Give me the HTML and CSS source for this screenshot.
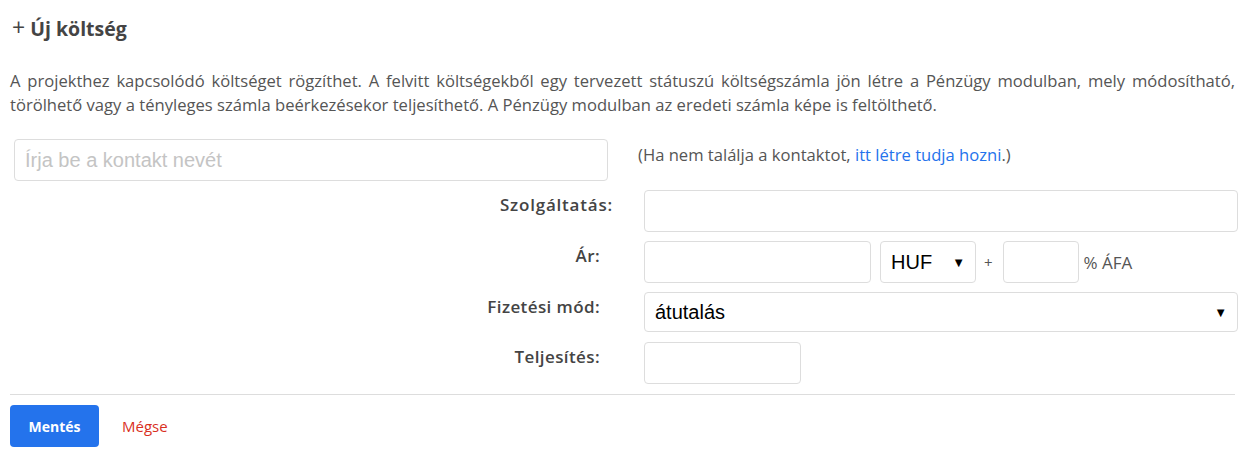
FILE: index.html
```html
<!DOCTYPE html>
<html lang="hu">
<head>
<meta charset="utf-8">
<title>Új költség</title>
<link rel="stylesheet" href="styles.css">
</head>
<body>
<div class="page">
  <h2 class="title"><span class="plus">+</span> Új költség</h2>
  <p class="intro"><span class="intro-line">A projekthez kapcsolódó költséget rögzíthet. A felvitt költségekből egy tervezett státuszú költségszámla jön létre a Pénzügy modulban, mely módosítható,</span><span class="intro-last">törölhető vagy a tényleges számla beérkezésekor teljesíthető. A Pénzügy modulban az eredeti számla képe is feltölthető.</span></p>

  <div class="contact-row">
    <input class="field contact" type="text" placeholder="Írja be a kontakt nevét">
    <span class="hint">(Ha nem találja a kontaktot, <a href="#">itt létre tudja hozni</a>.)</span>
  </div>

  <div class="form-row">
    <label class="label label-wide">Szolgáltatás:</label>
    <div class="controls"><input class="field full" type="text"></div>
  </div>
  <div class="form-row">
    <label class="label">Ár:</label>
    <div class="controls">
      <input class="field price" type="text">
      <div class="field select currency"><span>HUF</span><span class="arrow">▼</span></div>
      <span class="plus-sign">+</span>
      <input class="field vat" type="text">
      <span class="unit">% ÁFA</span>
    </div>
  </div>
  <div class="form-row">
    <label class="label">Fizetési mód:</label>
    <div class="controls"><div class="field select full pay"><span>átutalás</span><span class="arrow">▼</span></div></div>
  </div>
  <div class="form-row row-date">
    <label class="label">Teljesítés:</label>
    <div class="controls"><input class="field date" type="text"></div>
  </div>

  <hr class="sep">
  <div class="actions">
    <button class="btn-save" type="button">Mentés</button>
    <a class="cancel" href="#">Mégse</a>
  </div>
</div>
</body>
</html>
```

FILE: styles.css
```css
* { box-sizing: border-box; }
body {
  margin: 0;
  background: #fff;
  font-family: "Open Sans", "Noto Sans", sans-serif;
  color: #555;
}
.page { padding: 0 10px; }
.title {
  margin: 14px 0 0 2px;
  font-size: 19.5px;
  font-weight: 700;
  color: #444;
  line-height: 26px;
}
.plus { font-weight: 400; font-size: 23px; color: #444; }
.intro {
  margin: 27px 0 0 0;
  font-size: 16.6px;
  line-height: 24px;
  color: #555;
}
.intro-line {
  display: block;
  text-align: justify;
  text-align-last: justify;
}
.intro-last { display: block; }
.contact-row {
  display: flex;
  align-items: flex-start;
  margin-top: 22px;
  padding-left: 4px;
}
.field {
  flex-shrink: 0;
  height: 42px;
  border: 1px solid #ddd;
  border-radius: 4px;
  background: #fff;
  font-family: "Liberation Sans", Arial, sans-serif;
  font-size: 20px;
  color: #000;
  padding: 0 10px;
}
.contact { width: 594px; }
.contact::placeholder { color: #c4c4c4; }
.hint {
  margin-left: 30px;
  margin-top: 5px;
  font-size: 16.6px;
  line-height: 22px;
  white-space: nowrap;
}
.hint a { color: #2473ec; text-decoration: none; }
.form-row {
  display: flex;
  align-items: flex-start;
  margin-top: 9px;
}
.row-date { margin-top: 10px; }
.label {
  flex-shrink: 0;
  width: 634px;
  text-align: right;
  padding-right: 44px;
  padding-top: 4px;
  font-size: 17px;
  font-weight: 600;
  letter-spacing: 0.4px;
  color: #444;
  line-height: 22px;
}
.label-wide { padding-right: 31px; letter-spacing: 0.8px; }
.controls {
  flex: 1;
  min-width: 0;
  display: flex;
  align-items: center;
}
.full { width: 594px; }
.price { width: 227px; }
.select {
  display: flex;
  align-items: center;
  justify-content: space-between;
}
.currency { width: 96px; margin-left: 9px; }
.arrow { font-size: 13px; }
.plus-sign { margin: 0 10px 0 8px; font-size: 15px; }
.vat { width: 76px; }
.unit { margin-left: 5px; font-size: 17px; }
.pay { height: 40px; }
.date { width: 157px; }
.sep {
  margin: 10px 0 0 0;
  border: 0;
  border-top: 1px solid #ddd;
}
.actions {
  display: flex;
  align-items: center;
  margin-top: 10px;
}
.btn-save {
  width: 89px;
  height: 42px;
  border: 0;
  border-radius: 4px;
  background: #2473ec;
  color: #fff;
  font-family: "Open Sans", sans-serif;
  font-weight: 700;
  font-size: 14px;
}
.cancel {
  margin-left: 23px;
  color: #d9301e;
  text-decoration: none;
  font-size: 15px;
}
```
